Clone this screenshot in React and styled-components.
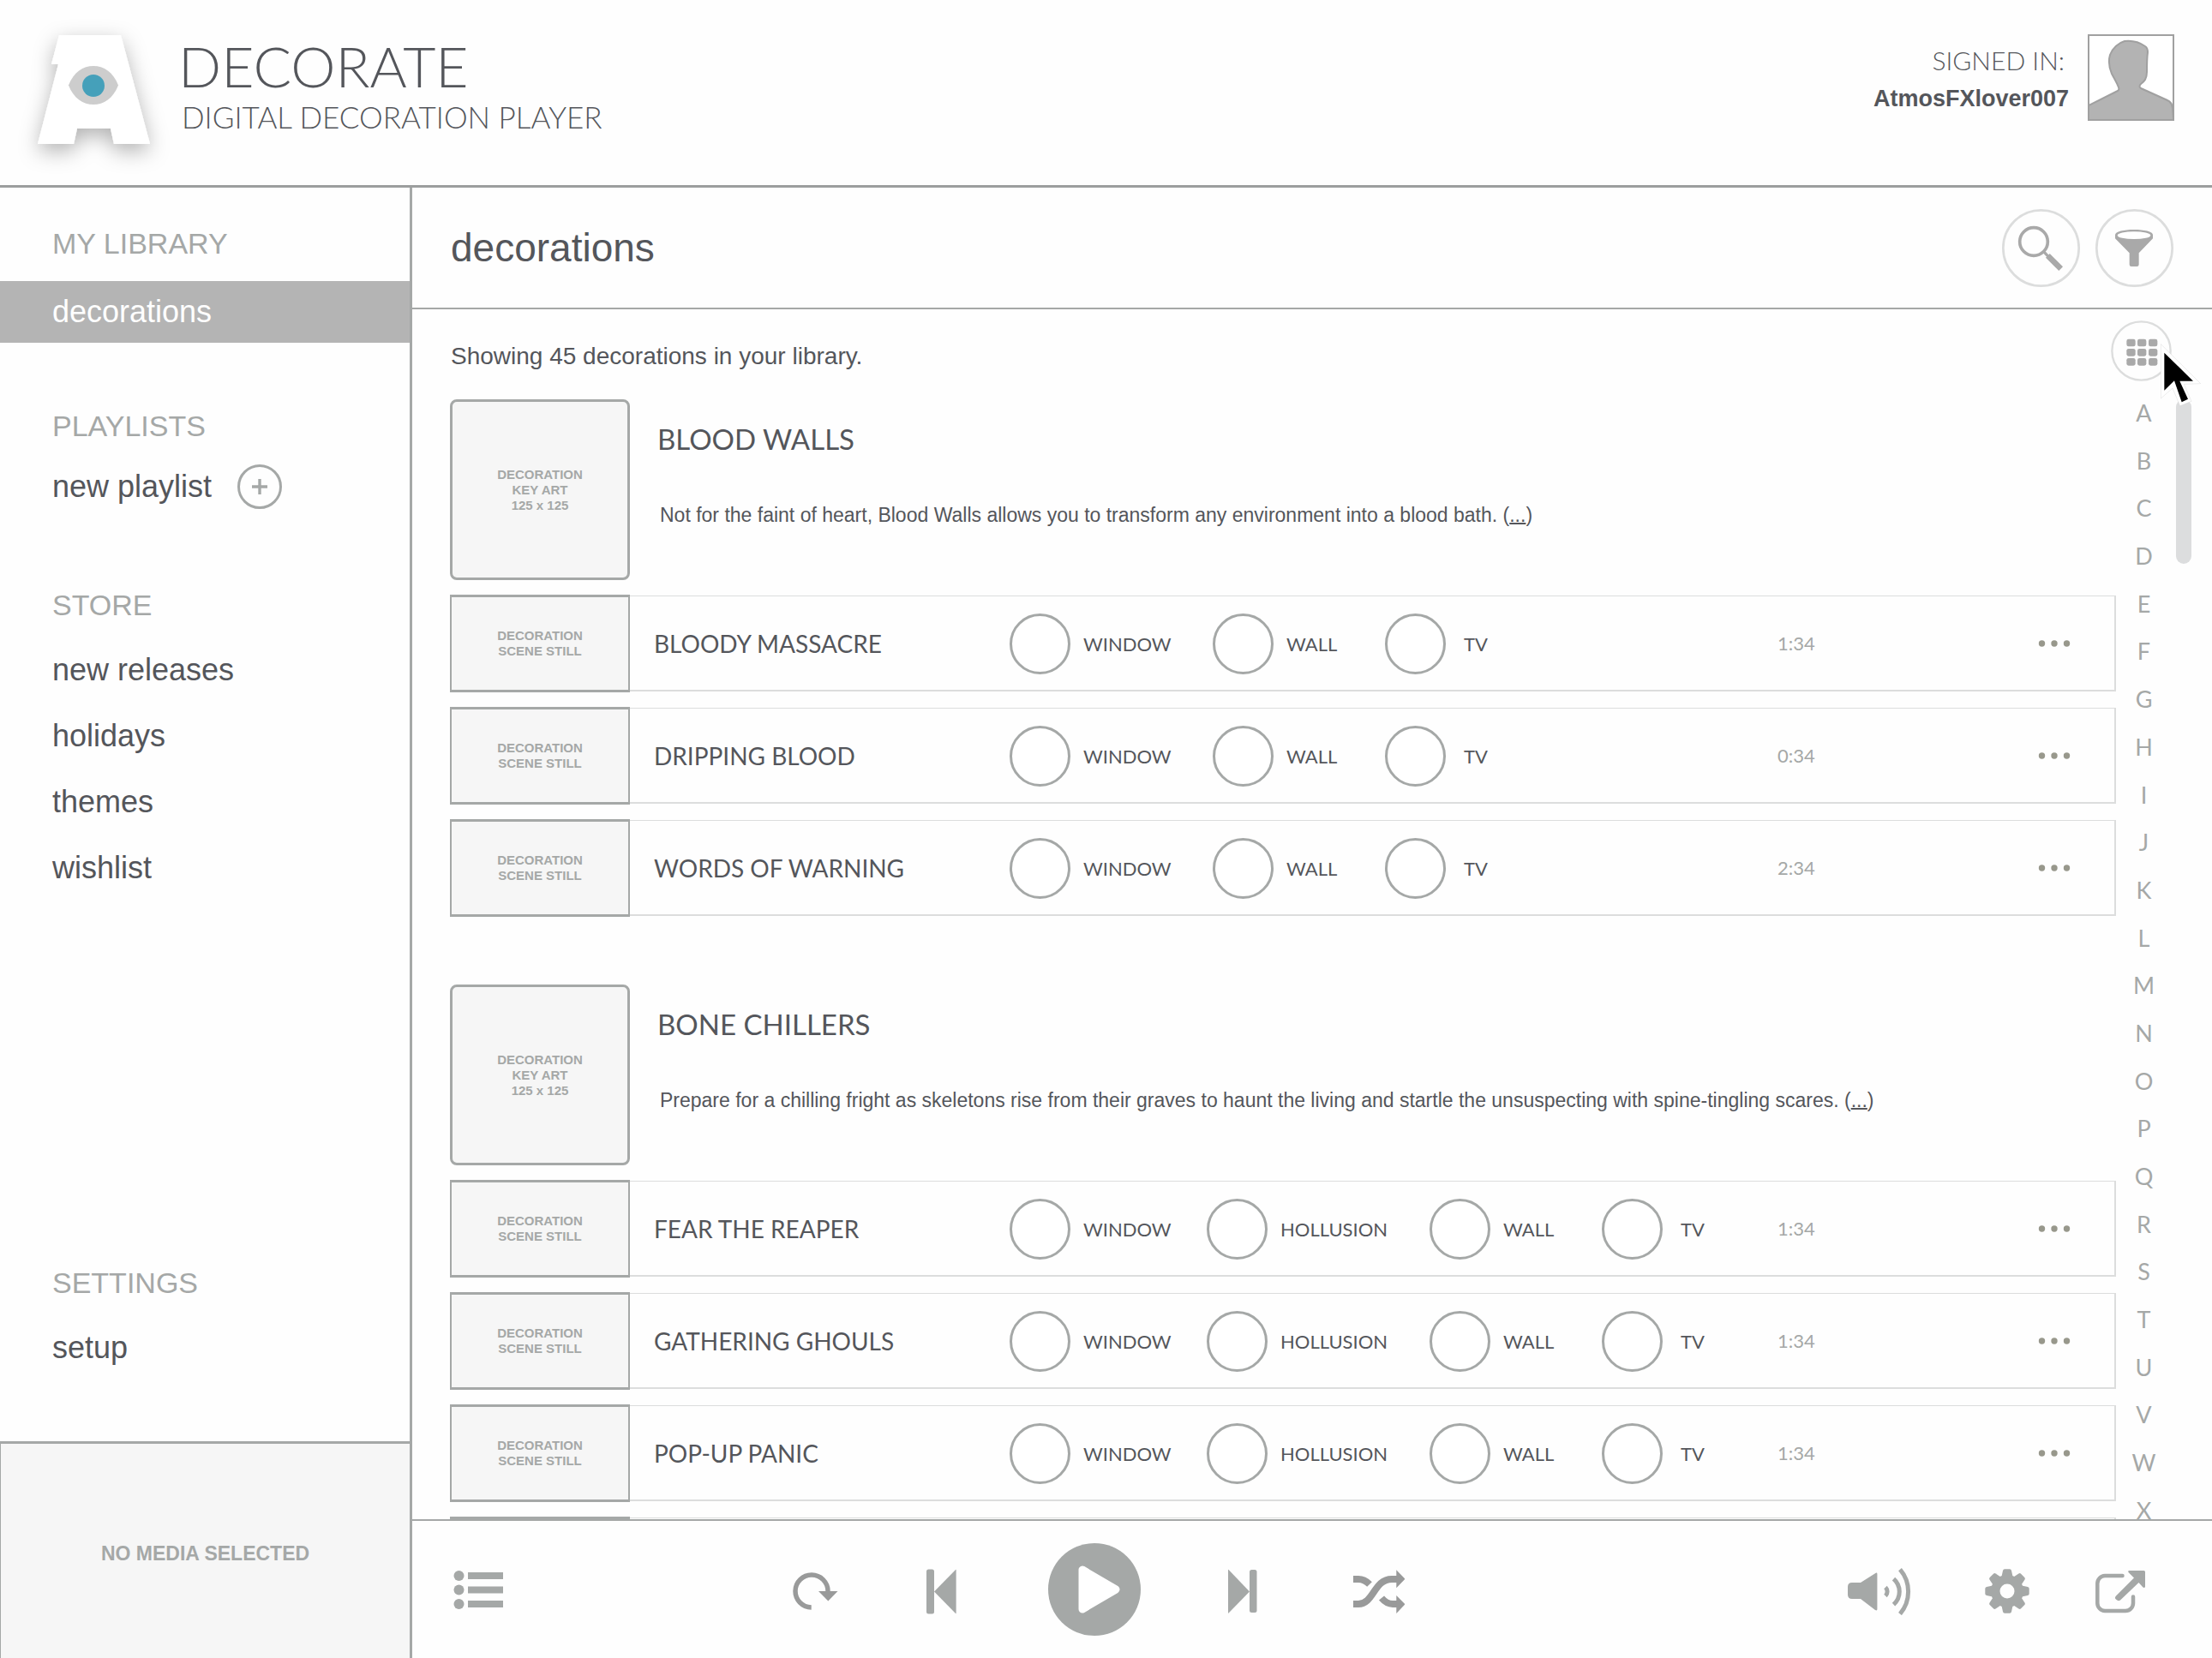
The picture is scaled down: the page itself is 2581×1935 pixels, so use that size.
import React from "react";
import styled, { createGlobalStyle } from "styled-components";

const sans = '"Liberation Sans", Arial, sans-serif';
const display = 'Lato, "Open Sans", sans-serif';

const ink = "#54565b";
const gray = "#a5a8a7";
const mid = "#9c9e9e";
const hairline = "#dcdddd";
const panel = "#f6f6f6";

const GlobalStyle = createGlobalStyle`
  *, *::before, *::after { box-sizing: border-box; }
  body { margin: 0; background: #fefefe; color: ${ink}; font-family: ${sans}; }
  h1, h2, h3, p, ul { margin: 0; padding: 0; font-weight: 400; }
  button { margin: 0; padding: 0; border: 0; background: none; font: inherit; color: inherit; cursor: pointer; }
  a { color: inherit; text-decoration: none; }
  svg { display: block; }
`;

const Shell = styled.div`
  display: grid;
  grid-template-columns: 481px minmax(0, 1fr);
  grid-template-rows: auto minmax(0, 1fr);
  height: 100vh;
  overflow: hidden;
`;

/* ---------- header ---------- */

const Header = styled.header`
  grid-column: 1 / -1;
  display: flex;
  justify-content: space-between;
  height: 219px;
  padding: 0 44px 0 20px;
  border-bottom: 3px solid ${mid};
`;

const Brand = styled.div`
  display: flex;
`;

const LogoMark = styled.svg`
  width: 188px;
  height: 216px;
`;

const BrandText = styled.div`
  padding-top: 39px;
  font-family: ${display};
`;

const BrandName = styled.h1`
  font-size: 66px;
  line-height: 75px;
  font-weight: 300;
`;

const BrandTagline = styled.p`
  padding-left: 4px;
  font-size: 35px;
  line-height: 45px;
  font-weight: 300;
`;

const Account = styled.div`
  display: flex;
  gap: 22px;
`;

const AccountText = styled.div`
  padding-top: 48px;
  line-height: 45px;
  text-align: right;
`;

const SignedIn = styled.p`
  padding-right: 5px;
  font-family: ${display};
  font-size: 30px;
  font-weight: 300;
`;

const UserName = styled.p`
  font-size: 27px;
  font-weight: 700;
`;

const Avatar = styled.svg`
  width: 101px;
  height: 101px;
  margin-top: 40px;
`;

/* ---------- sidebar ---------- */

const Sidebar = styled.aside`
  display: flex;
  flex-direction: column;
  min-height: 0;
  border-right: 3px solid ${gray};
`;

const SideNav = styled.nav`
  flex: 1;
  display: flex;
  flex-direction: column;
  padding: 30px 0 73px;
  font-size: 36px;
`;

const NavSection = styled.section`
  display: flex;
  flex-direction: column;
  gap: ${(p) => p.$gap}px;
  margin-top: ${(p) => p.$top};
`;

const NavHeading = styled.h2`
  padding-left: 61px;
  font-size: 34px;
  line-height: 70px;
  color: ${gray};
`;

const NavItem = styled.a`
  display: block;
  padding-left: 61px;
  line-height: 72px;
  color: ${(p) => (p.$active ? "#fefefe" : ink)};
  background: ${(p) => (p.$active ? "#b4b4b4" : "transparent")};
`;

const NavLine = styled.div`
  display: flex;
  align-items: center;
  gap: 30px;
`;

const AddButton = styled.button`
  width: 52px;
  height: 52px;
  border: 3px solid ${gray};
  border-radius: 50%;
  display: grid;
  place-items: center;
`;

const MediaPreview = styled.div`
  height: 253px;
  display: grid;
  place-items: center;
  padding-top: 6px;
  border-top: 3px solid ${gray};
  border-left: 1px solid ${gray};
  background: ${panel};
  color: ${gray};
  font-size: 23px;
  font-weight: 700;
`;

/* ---------- main ---------- */

const Main = styled.main`
  display: flex;
  flex-direction: column;
  min-height: 0;
`;

const TitleBar = styled.div`
  display: flex;
  align-items: center;
  justify-content: space-between;
  height: 142px;
  padding: 0 45px;
  border-bottom: 2px solid ${gray};
`;

const PageTitle = styled.h2`
  font-size: 46px;
  line-height: 60px;
`;

const ButtonPair = styled.div`
  display: flex;
  gap: 18px;
`;

const RoundButton = styled.button`
  position: relative;
  width: ${(p) => p.$size}px;
  height: ${(p) => p.$size}px;

  & > svg:first-child {
    width: 100%;
    height: 100%;
  }
`;

const SummaryBar = styled.div`
  display: flex;
  align-items: flex-end;
  justify-content: space-between;
  height: 105px;
  padding: 0 47px 21px 45px;
`;

const Summary = styled.p`
  font-size: 28px;
  line-height: 58px;
`;

const Pointer = styled.svg`
  position: absolute;
  z-index: 2;
  left: 58px;
  top: 27px;
  width: 48px;
  height: 74px;
`;

const Library = styled.div`
  flex: 1;
  min-height: 0;
  display: flex;
  padding: 0 24px 0 44px;
`;

const Groups = styled.div`
  flex: 1;
  min-width: 0;
  display: flex;
  flex-direction: column;
  gap: 79px;
  overflow: hidden;
`;

const Group = styled.section`
  display: flex;
  flex-direction: column;
  gap: 17px;
`;

const GroupHeader = styled.div`
  display: flex;
  gap: 32px;
`;

const Placeholder = styled.div`
  flex: none;
  display: grid;
  place-content: center;
  width: 210px;
  height: ${(p) => (p.$art ? 211 : 114)}px;
  border: solid ${gray};
  border-width: ${(p) => (p.$art ? "3px" : "3px 2px")};
  border-radius: ${(p) => (p.$art ? 8 : 0)}px;
  background: ${panel};
  color: ${gray};
  font-size: 15px;
  line-height: 18px;
  font-weight: 700;
  text-align: center;
`;

const GroupText = styled.div`
  padding-top: 26px;
`;

const GroupTitle = styled.h3`
  font-family: ${display};
  font-size: 33px;
  line-height: 40px;
`;

const Description = styled.p`
  padding: 54px 0 0 3px;
  font-size: 23px;
  line-height: 30px;

  a { text-decoration: underline; text-decoration-thickness: 2px; }
`;

const SceneRow = styled.div`
  display: flex;
  align-items: center;
`;

const SceneBody = styled.div`
  flex: 1;
  display: grid;
  grid-template-columns: 415px minmax(0, 1fr) 304px 38px;
  align-items: center;
  height: 112px;
  padding: 0 51px 0 28px;
  border: solid ${hairline};
  border-width: 1px 2px 2px 0;
  font-family: ${display};
`;

const SceneName = styled.h4`
  margin: 0;
  font-size: 28px;
  line-height: 36px;
  font-weight: 400;
`;

const Modes = styled.div`
  display: grid;
  grid-template-columns: ${(p) => p.$columns};
  padding-top: 2px;
`;

const Mode = styled.label`
  display: flex;
  align-items: center;
  gap: 15px;
  font-size: 22px;
  line-height: 30px;
`;

const ModeName = styled.span`
  min-width: 40px;
  text-align: center;
`;

const ModeBox = styled.input`
  appearance: none;
  flex: none;
  width: 71px;
  height: 71px;
  margin: 0;
  border: 3px solid ${gray};
  border-radius: 50%;
  background: #fff;

  &:checked { background: ${gray}; }
`;

const Duration = styled.span`
  font-size: 22px;
  line-height: 30px;
  color: ${gray};
`;

const AlphaIndex = styled.nav`
  width: 65px;
  display: flex;
  flex-direction: column;
  align-items: center;
  justify-content: space-between;
  padding-top: 6px;
  font-family: ${display};
  font-size: 27px;
  line-height: 20px;
  color: ${gray};
`;

const ScrollThumb = styled.div`
  width: 18px;
  height: 192px;
  margin-left: 5px;
  border-radius: 9px;
  background: #dcddde;
`;

/* ---------- player ---------- */

const Player = styled.footer`
  display: grid;
  grid-template-columns: 400fr auto 863fr;
  align-items: center;
  height: 162px;
  padding: 0 78px 0 44px;
  border-top: 2px solid ${gray};
`;

const Transport = styled.div`
  display: flex;
  align-items: center;
  gap: 100px;
`;

const Tools = styled.div`
  display: flex;
  justify-content: flex-end;
  gap: 77px;
`;

/* ---------- drawings ---------- */

function Icon({ w, h = 60, children, color = gray }) {
  return (
    <svg width={w} height={h} viewBox={`0 0 ${w} ${h}`} fill={color} aria-hidden="true">
      {children}
    </svg>
  );
}

function Logo() {
  return (
    <LogoMark viewBox="20 0 188 216" role="img" aria-label="Decorate" overflow="visible">
      <defs>
        <filter id="soft" x="-40%" y="-40%" width="180%" height="190%">
          <feDropShadow dx="0" dy="8" stdDeviation="12" floodColor="#000" floodOpacity="0.3" />
        </filter>
      </defs>
      <path
        filter="url(#soft)"
        fill="#fff"
        d="M69 41H141L175 168H133L129 150H90L86 168H44L68 75H60Z"
      />
      <path
        fill="#cdcdcd"
        d="M80 99.500C86 84 97 77 109 77S132 84 138 99.500C132 115 121 122 109 122S86 115 80 99.500Z"
      />
      <circle cx="109" cy="100" r="13" fill="#45a0ba" />
    </LogoMark>
  );
}

function SearchIcon() {
  return (
    <svg viewBox="0 0 273 273" fill="none" aria-hidden="true">
      <circle cx="136.500" cy="136.500" r="132.500" stroke={hairline} strokeWidth="8" />
      <circle cx="111" cy="114" r="49" stroke="#a9a9a9" strokeWidth="11" />
      <path d="M145 148L162 166" stroke="#a9a9a9" strokeWidth="10" />
      <path d="M160 163L206 209" stroke="#a9a9a9" strokeWidth="20" />
    </svg>
  );
}

function FunnelIcon() {
  return (
    <svg viewBox="0 0 273 273" fill="none" aria-hidden="true">
      <circle cx="136.500" cy="136.500" r="132.500" stroke={hairline} strokeWidth="8" />
      <path
        fill="#a9a9a9"
        d="M69 90C69 79 99 72 135 72S201 79 201 90V103L152 154V194Q152 201 145 201H126Q119 201 119 194V154L69 103Z"
      />
      <ellipse cx="135" cy="92" rx="58" ry="13" fill="#fff" />
    </svg>
  );
}

function GridIcon() {
  return (
    <svg viewBox="0 0 213 213" aria-hidden="true">
      <circle cx="106.500" cy="106.500" r="102.500" fill="none" stroke={hairline} strokeWidth="7" />
      {[65, 99, 132].map((y) =>
        [55, 93, 132].map((x) => (
          <rect key={`${x}-${y}`} x={x} y={y} width="31" height="26" rx="7" fill="#a9a9a9" />
        ))
      )}
    </svg>
  );
}

function GearIcon() {
  return (
    <Icon w={52}>
      <mask id="hub">
        <rect width="52" height="64" fill="#fff" />
        <circle cx="26" cy="32" r="8.500" fill="#000" />
      </mask>
      <g mask="url(#hub)">
        <circle cx="26" cy="32" r="19" />
        {[0, 45, 90, 135, 180, 225, 270, 315].map((a) => (
          <path
            key={a}
            transform={`rotate(${a} 26 32)`}
            d="M19.500 15L21 8Q21.400 6.300 23 6.300H29Q30.600 6.300 31 8L32.500 15Z"
          />
        ))}
      </g>
    </Icon>
  );
}

/* ---------- data ---------- */

const threeModes = { columns: "237px 201px auto", names: ["WINDOW", "WALL", "TV"] };
const fourModes = { columns: "230px 260px 201px auto", names: ["WINDOW", "HOLLUSION", "WALL", "TV"] };

const groups = [
  {
    title: "BLOOD WALLS",
    text: "Not for the faint of heart, Blood Walls allows you to transform any environment into a blood bath.",
    modes: threeModes,
    scenes: [
      ["BLOODY MASSACRE", "1:34"],
      ["DRIPPING BLOOD", "0:34"],
      ["WORDS OF WARNING", "2:34"],
    ],
  },
  {
    title: "BONE CHILLERS",
    text: "Prepare for a chilling fright as skeletons rise from their graves to haunt the living and startle the unsuspecting with spine-tingling scares.",
    modes: fourModes,
    scenes: [
      ["FEAR THE REAPER", "1:34"],
      ["GATHERING GHOULS", "1:34"],
      ["POP-UP PANIC", "1:34"],
    ],
    more: true,
  },
];

const letters = "ABCDEFGHIJKLMNOPQRSTUVWX".split("");

function Scene({ name, time, modes }) {
  return (
    <SceneRow>
      <Placeholder>
        DECORATION
        <br />
        SCENE STILL
      </Placeholder>
      <SceneBody>
        <SceneName>{name}</SceneName>
        <Modes $columns={modes.columns}>
          {modes.names.map((m) => (
            <Mode key={m}>
              <ModeBox type="checkbox" />
              <ModeName>{m}</ModeName>
            </Mode>
          ))}
        </Modes>
        <Duration>{time}</Duration>
        <button type="button" aria-label="More">
          <Icon w={38} h={12} color="#98988c">
            <circle cx="4.500" cy="6" r="3.700" />
            <circle cx="19" cy="6" r="3.700" />
            <circle cx="33.500" cy="6" r="3.700" />
          </Icon>
        </button>
      </SceneBody>
    </SceneRow>
  );
}

export default function App() {
  return (
    <>
      <GlobalStyle />
      <Shell>
        <Header>
          <Brand>
            <Logo />
            <BrandText>
              <BrandName>DECORATE</BrandName>
              <BrandTagline>DIGITAL DECORATION PLAYER</BrandTagline>
            </BrandText>
          </Brand>
          <Account>
            <AccountText>
              <SignedIn>SIGNED IN:</SignedIn>
              <UserName>AtmosFXlover007</UserName>
            </AccountText>
            <Avatar viewBox="0 0 101 101" role="img" aria-label="Profile">
              <rect x="1" y="1" width="99" height="99" fill="#fff" stroke="#a0a0a0" strokeWidth="2" />
              <path
                fill="#b3b3b3"
                stroke="#a0a0a0"
                strokeWidth="2"
                d="M1 100V83L35 66Q37 65 36 62C34 56 31 52 28 46C25 39 24 31 26 24C29 16 36 10 43 8C52 7 60 9 67 14Q70 16 70 21C69 28 69 35 69 44C69 52 66 55 62 58Q59 61 62 63L93 77Q98 79 99 86L100 100Z"
              />
            </Avatar>
          </Account>
        </Header>

        <Sidebar>
          <SideNav>
            <NavSection $gap={9} $top="0">
              <NavHeading>MY LIBRARY</NavHeading>
              <NavItem href="#decorations" $active>decorations</NavItem>
            </NavSection>
            <NavSection $gap={0} $top="62px">
              <NavHeading>PLAYLISTS</NavHeading>
              <NavLine>
                <NavItem href="#new-playlist">new playlist</NavItem>
                <AddButton type="button" aria-label="Add playlist">
                  <Icon w={20} h={20}>
                    <path d="M8.300 1H11.700V8.300H19V11.700H11.700V19H8.300V11.700H1V8.300H8.300Z" />
                  </Icon>
                </AddButton>
              </NavLine>
            </NavSection>
            <NavSection $gap={5} $top="67px">
              <NavHeading>STORE</NavHeading>
              <NavItem href="#new-releases">new releases</NavItem>
              <NavItem href="#holidays">holidays</NavItem>
              <NavItem href="#themes">themes</NavItem>
              <NavItem href="#wishlist">wishlist</NavItem>
            </NavSection>
            <NavSection $gap={5} $top="auto">
              <NavHeading>SETTINGS</NavHeading>
              <NavItem href="#setup">setup</NavItem>
            </NavSection>
          </SideNav>
          <MediaPreview>NO MEDIA SELECTED</MediaPreview>
        </Sidebar>

        <Main>
          <TitleBar>
            <PageTitle>decorations</PageTitle>
            <ButtonPair>
              <RoundButton type="button" $size={91} aria-label="Search">
                <SearchIcon />
              </RoundButton>
              <RoundButton type="button" $size={91} aria-label="Filter">
                <FunnelIcon />
              </RoundButton>
            </ButtonPair>
          </TitleBar>

          <SummaryBar>
            <Summary>Showing 45 decorations in your library.</Summary>
            <RoundButton type="button" $size={71} aria-label="Grid view">
              <GridIcon />
              <Pointer viewBox="588 498 144 222" aria-hidden="true">
                <path
                  fill="#fff"
                  stroke="#c9c9c9"
                  strokeWidth="1"
                  d="M589 500L728 638L670 640L696 700L656 716L630 654L589 690Z"
                />
                <path d="M601 530L702 629H655L684 692L662 703L636 628L601 662Z" />
              </Pointer>
            </RoundButton>
          </SummaryBar>

          <Library>
            <Groups>
              {groups.map((g) => (
                <Group key={g.title}>
                  <GroupHeader>
                    <Placeholder $art>
                      DECORATION
                      <br />
                      KEY ART
                      <br />
                      125 x 125
                    </Placeholder>
                    <GroupText>
                      <GroupTitle>{g.title}</GroupTitle>
                      <Description>
                        {g.text} (<a href="#more">...</a>)
                      </Description>
                    </GroupText>
                  </GroupHeader>
                  {g.scenes.map(([name, time]) => (
                    <Scene key={name} name={name} time={time} modes={g.modes} />
                  ))}
                  {g.more && (
                    <SceneRow>
                      <Placeholder />
                      <SceneBody />
                    </SceneRow>
                  )}
                </Group>
              ))}
            </Groups>
            <AlphaIndex aria-label="Alphabet">
              {letters.map((l) => (
                <a key={l} href={`#${l}`}>{l}</a>
              ))}
            </AlphaIndex>
            <ScrollThumb />
          </Library>

          <Player>
            <div>
              <button type="button" aria-label="Queue">
                <Icon w={62}>
                  {[16, 32.500, 49].map((y) => (
                    <g key={y}>
                      <circle cx="10.500" cy={y} r="6" />
                      <rect x="21" y={y - 4} width="41" height="8" />
                    </g>
                  ))}
                </Icon>
              </button>
            </div>
            <Transport>
              <button type="button" aria-label="Repeat">
                <Icon w={56} color="#999a9a">
                  <path d="M21.700 51A19 19 0 1 1 41 32" fill="none" stroke="#999a9a" strokeWidth="5.500" />
                  <path d="M30 32H52.500L41.300 43.500Z" />
                </Icon>
              </button>
              <button type="button" aria-label="Previous">
                <Icon w={42}>
                  <rect x="0" y="6.500" width="9" height="52" rx="2.500" />
                  <path d="M9 32.500L34 7Q34.600 6.500 34.600 7.500V57.500Q34.600 58.500 34 58Z" />
                </Icon>
              </button>
              <button type="button" aria-label="Play">
                <Icon w={108} h={108}>
                  <circle cx="54" cy="54" r="54" />
                  <path d="M40 31V77L79 54Z" fill="#fff" stroke="#fff" strokeWidth="9" strokeLinejoin="round" />
                </Icon>
              </button>
              <button type="button" aria-label="Next">
                <Icon w={48}>
                  <path d="M2 7Q2 6.500 2.600 7L27 32.500L2.600 57.500Q2 58 2 57Z" />
                  <rect x="27" y="7" width="8.500" height="50" rx="2.500" />
                </Icon>
              </button>
              <button type="button" aria-label="Shuffle">
                <Icon w={60} color="#999a9a">
                  <g fill="none" stroke="#999a9a" strokeWidth="8">
                    <path d="M0 47H6C24 47 24 18 45 18H51" />
                    <path d="M0 18H6Q13 18 19 24" />
                    <path d="M33 40Q39 47 46 47H51" />
                  </g>
                  <path d="M50.300 7.300L60.500 17.700L50.300 28.300ZM50.300 37L60.500 47.300L50.300 58Z" />
                </Icon>
              </button>
            </Transport>
            <Tools>
              <button type="button" aria-label="Volume">
                <Icon w={83}>
                  <path d="M15 22L32 11.200Q34.400 9.700 34.400 12V53Q34.400 55.300 32 54L15 41H5Q0 41 0 36V27Q0 22 5 22Z" />
                  <g fill="none" stroke={gray} strokeWidth="5">
                    <path d="M44 27.500A7 7 0 0 1 44 37.500" />
                    <path d="M53.500 17.500A20 20 0 0 1 53.500 47.500" />
                    <path d="M61 6.500A40 40 0 0 1 61 58.500" />
                  </g>
                </Icon>
              </button>
              <button type="button" aria-label="Settings">
                <GearIcon />
              </button>
              <button type="button" aria-label="Open in window">
                <Icon w={58}>
                  <path
                    d="M31.500 14H11A9 9 0 0 0 2.300 23V46A9 9 0 0 0 11 55H35A9 9 0 0 0 44 46V38.500"
                    fill="none"
                    stroke={gray}
                    strokeWidth="4.500"
                    strokeLinecap="round"
                  />
                  <path d="M39 8H56.500Q58 8 58 9.500V27Q57 29 55 27L50.500 22L29 42.500Q26.500 44 24.500 42L23 40.500Q22.500 39 24 37.500L45 16.500L38.500 10Q37.500 8.500 39 8Z" />
                </Icon>
              </button>
            </Tools>
          </Player>
        </Main>
      </Shell>
    </>
  );
}
